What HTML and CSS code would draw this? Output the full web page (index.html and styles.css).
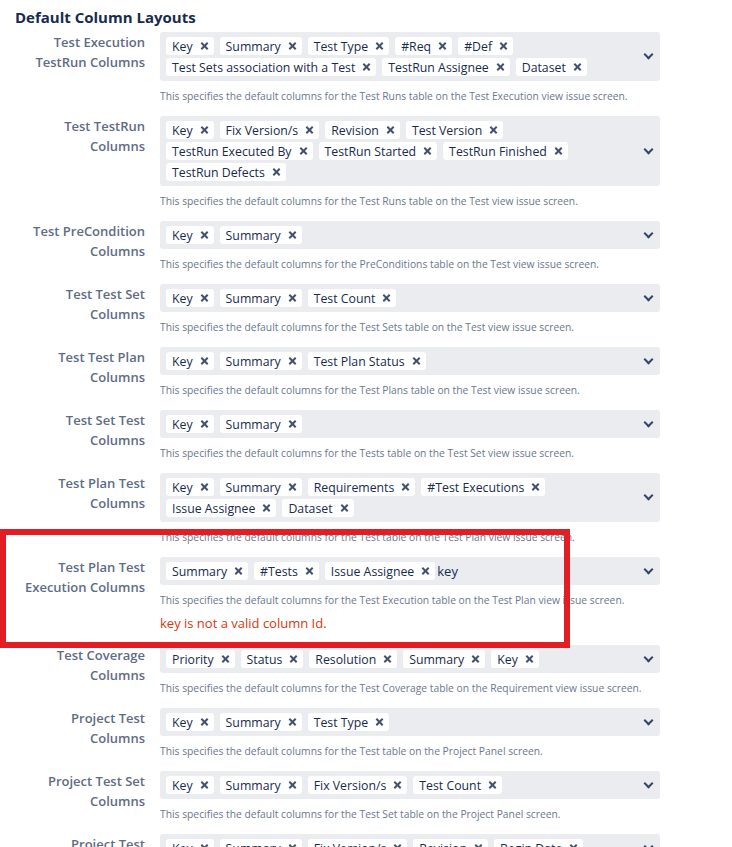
FILE: index.html
```
<!DOCTYPE html>
<html lang="en">

<head>
  <meta charset="UTF-8">
  <meta name="viewport" content="width=device-width, initial-scale=1.0">
  <link rel="stylesheet" href="styles.css">
  <title>Default Column Layouts</title>
</head>

<body>
  <h3 class="title">Default Column Layouts</h3>
  <div class="form">

    <!-- Test Execution -->
    <div class="label">Test Execution TestRun Columns</div>
    <div class="group">
      <div class="select">
        <div class="tags">
          <span class="tag">Key<i class="x"></i></span>
          <span class="tag">Summary<i class="x"></i></span>
          <span class="tag">Test Type<i class="x"></i></span>
          <span class="tag">#Req<i class="x"></i></span>
          <span class="tag">#Def<i class="x"></i></span>
          <span class="tag">Test Sets association with a Test<i class="x"></i></span>
          <span class="tag">TestRun Assignee<i class="x"></i></span>
          <span class="tag">Dataset<i class="x"></i></span>
        </div>
        <i class="chevron"></i>
      </div>
      <div class="desc">This specifies the default columns for the Test Runs table on the Test Execution view issue screen.</div>
    </div>

    <!-- Test -->
    <div class="label">Test TestRun Columns</div>
    <div class="group">
      <div class="select">
        <div class="tags">
          <span class="tag">Key<i class="x"></i></span>
          <span class="tag">Fix Version/s<i class="x"></i></span>
          <span class="tag">Revision<i class="x"></i></span>
          <span class="tag">Test Version<i class="x"></i></span>
          <span class="tag">TestRun Executed By<i class="x"></i></span>
          <span class="tag">TestRun Started<i class="x"></i></span>
          <span class="tag">TestRun Finished<i class="x"></i></span>
          <span class="tag">TestRun Defects<i class="x"></i></span>
        </div>
        <i class="chevron"></i>
      </div>
      <div class="desc">This specifies the default columns for the Test Runs table on the Test view issue screen.</div>
    </div>

    <div class="label">Test PreCondition Columns</div>
    <div class="group">
      <div class="select">
        <div class="tags">
          <span class="tag">Key<i class="x"></i></span>
          <span class="tag">Summary<i class="x"></i></span>
        </div>
        <i class="chevron"></i>
      </div>
      <div class="desc">This specifies the default columns for the PreConditions table on the Test view issue screen.</div>
    </div>

    <div class="label">Test Test Set Columns</div>
    <div class="group">
      <div class="select">
        <div class="tags">
          <span class="tag">Key<i class="x"></i></span>
          <span class="tag">Summary<i class="x"></i></span>
          <span class="tag">Test Count<i class="x"></i></span>
        </div>
        <i class="chevron"></i>
      </div>
      <div class="desc">This specifies the default columns for the Test Sets table on the Test view issue screen.</div>
    </div>

    <div class="label">Test Test Plan Columns</div>
    <div class="group">
      <div class="select">
        <div class="tags">
          <span class="tag">Key<i class="x"></i></span>
          <span class="tag">Summary<i class="x"></i></span>
          <span class="tag">Test Plan Status<i class="x"></i></span>
        </div>
        <i class="chevron"></i>
      </div>
      <div class="desc">This specifies the default columns for the Test Plans table on the Test view issue screen.</div>
    </div>

    <!-- Test Set -->
    <div class="label">Test Set Test Columns</div>
    <div class="group">
      <div class="select">
        <div class="tags">
          <span class="tag">Key<i class="x"></i></span>
          <span class="tag">Summary<i class="x"></i></span>
        </div>
        <i class="chevron"></i>
      </div>
      <div class="desc">This specifies the default columns for the Tests table on the Test Set view issue screen.</div>
    </div>

    <!-- Test Plan -->
    <div class="label">Test Plan Test Columns</div>
    <div class="group">
      <div class="select">
        <div class="tags">
          <span class="tag">Key<i class="x"></i></span>
          <span class="tag">Summary<i class="x"></i></span>
          <span class="tag">Requirements<i class="x"></i></span>
          <span class="tag">#Test Executions<i class="x"></i></span>
          <span class="tag">Issue Assignee<i class="x"></i></span>
          <span class="tag">Dataset<i class="x"></i></span>
        </div>
        <i class="chevron"></i>
      </div>
      <div class="desc">This specifies the default columns for the Test table on the Test Plan view issue screen.</div>
    </div>

    <div class="label">Test Plan Test Execution Columns</div>
    <div class="group">
      <div class="select">
        <div class="tags">
          <span class="tag">Summary<i class="x"></i></span>
          <span class="tag">#Tests<i class="x"></i></span>
          <span class="tag">Issue Assignee<i class="x"></i></span>
          <span class="typed">key</span>
        </div>
        <i class="chevron"></i>
      </div>
      <div class="desc">This specifies the default columns for the Test Execution table on the Test Plan view issue screen.</div>
      <div class="error">key is not a valid column Id.</div>
    </div>

    <!-- Requirement -->
    <div class="label">Test Coverage Columns</div>
    <div class="group">
      <div class="select">
        <div class="tags">
          <span class="tag">Priority<i class="x"></i></span>
          <span class="tag">Status<i class="x"></i></span>
          <span class="tag">Resolution<i class="x"></i></span>
          <span class="tag">Summary<i class="x"></i></span>
          <span class="tag">Key<i class="x"></i></span>
        </div>
        <i class="chevron"></i>
      </div>
      <div class="desc">This specifies the default columns for the Test Coverage table on the Requirement view issue screen.</div>
    </div>

    <!-- Project panel -->
    <div class="label">Project Test Columns</div>
    <div class="group">
      <div class="select">
        <div class="tags">
          <span class="tag">Key<i class="x"></i></span>
          <span class="tag">Summary<i class="x"></i></span>
          <span class="tag">Test Type<i class="x"></i></span>
        </div>
        <i class="chevron"></i>
      </div>
      <div class="desc">This specifies the default columns for the Test table on the Project Panel screen.</div>
    </div>

    <div class="label">Project Test Set Columns</div>
    <div class="group">
      <div class="select">
        <div class="tags">
          <span class="tag">Key<i class="x"></i></span>
          <span class="tag">Summary<i class="x"></i></span>
          <span class="tag">Fix Version/s<i class="x"></i></span>
          <span class="tag">Test Count<i class="x"></i></span>
        </div>
        <i class="chevron"></i>
      </div>
      <div class="desc">This specifies the default columns for the Test Set table on the Project Panel screen.</div>
    </div>

    <div class="label">Project Test Execution Columns</div>
    <div class="group">
      <div class="select">
        <div class="tags">
          <span class="tag">Key<i class="x"></i></span>
          <span class="tag">Summary<i class="x"></i></span>
          <span class="tag">Fix Version/s<i class="x"></i></span>
          <span class="tag">Revision<i class="x"></i></span>
          <span class="tag">Begin Date<i class="x"></i></span>
        </div>
        <i class="chevron"></i>
      </div>
      <div class="desc">This specifies the default columns for the Test Execution table on the Project Panel screen.</div>
    </div>

  </div>

  <!-- annotation -->
  <div class="mark"></div>
</body>
</html>
```

FILE: styles.css
```
html,
body {
  margin: 0;
  background: #fff;
  overflow: hidden;
}

body {
  position: relative;
  font-family: "Open Sans", "Noto Sans", sans-serif;
  color: #172b4d;
  padding: 0 15px;
}

.title {
  margin: 7px 0 5px;
  font-size: 15px;
  line-height: 20px;
  font-weight: 700;
}

.form {
  display: grid;
  grid-template-columns: 130px 500px;
  column-gap: 15px;
  align-items: start;
}

.label {
  text-align: right;
  font-size: 13px;
  line-height: 20px;
  font-weight: 600;
  color: #5e6c84;
}

.group {
  margin-bottom: 12px;
}

.select {
  display: flex;
  align-items: center;
  background: #ebecf0;
  border-radius: 3px;
  min-height: 28px;
  box-sizing: border-box;
  padding: 5px 6px;
}

.tags {
  flex: 1;
  display: flex;
  flex-wrap: wrap;
  align-items: center;
  gap: 3px 6px;
}

.tag {
  display: inline-flex;
  align-items: center;
  height: 18px;
  padding: 0 6px;
  background: #fff;
  border-radius: 3px;
  font-size: 12.3px;
  white-space: nowrap;
}

.typed {
  font-size: 13px;
  line-height: 18px;
  margin-left: -4px;
}

/* little cross */
.x {
  display: inline-block;
  position: relative;
  width: 7px;
  height: 7px;
  margin-left: 8px;
}

.x::before,
.x::after {
  content: "";
  position: absolute;
  left: -1px;
  top: 2.5px;
  width: 9px;
  height: 2px;
  background: #42526e;
  transform: rotate(45deg);
}

.x::after {
  transform: rotate(-45deg);
}

.chevron {
  display: block;
  width: 5px;
  height: 5px;
  margin: 0 2px 4px 8px;
  border-right: 2.5px solid #344563;
  border-bottom: 2.5px solid #344563;
  transform: rotate(45deg);
}

.desc {
  margin-top: 7px;
  font-size: 10.3px;
  line-height: 16px;
  color: #6b778c;
}

.error {
  margin-top: 5px;
  font-size: 13px;
  line-height: 20px;
  color: #de350b;
}

.mark {
  position: absolute;
  left: 0;
  top: 529px;
  width: 558px;
  height: 107px;
  border: 6px solid #e31d24;
  pointer-events: none;
}
```
